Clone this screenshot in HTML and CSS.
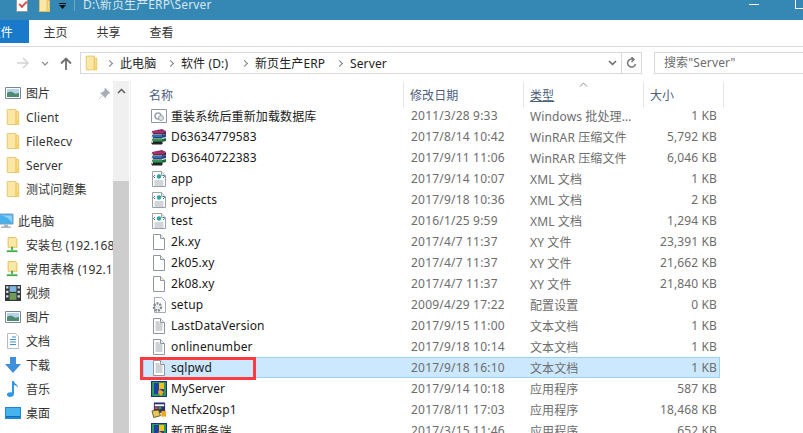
FILE: index.html
```html
<!DOCTYPE html>
<html lang="zh">
<head>
  <meta charset="UTF-8">
  <title>Server</title>
  <link rel="stylesheet" href="styles.css">
</head>
<body>
  <!-- Icones -->
  <svg class="defs" width="0" height="0">
    <symbol id="folder" viewBox="0 0 16 18">
      <path d="M1.500 .5h10v17h-10z" fill="#fde7a4" stroke="#e3c262"/>
      <path d="M11.500 3h3v14.500h-3z" fill="#fbe08c" stroke="#e3c262"/>
      <path d="M10.500 13h4v4h-4z" fill="#f6d168"/>
    </symbol>
    <symbol id="netfolder" viewBox="0 0 16 18">
      <path d="M2.500 .5h8l2 2v9h-10z" fill="#fde7a4" stroke="#e0b94e"/>
      <path d="M7 11v4" stroke="#3fae3f" stroke-width="2"/>
      <path d="M1 15h12v2H1z" fill="#3fae3f"/>
    </symbol>
    <symbol id="picture" viewBox="0 0 16 12">
      <path d="M.5 .5h15v11H.5z" fill="#fff" stroke="#7d8794"/>
      <path d="M2 2h12v4H2z" fill="#b5d3ec"/>
      <path d="M2 6c3-2 5-1 7 0s3 0 5 0v4H2z" fill="#4f8a72"/>
    </symbol>
    <symbol id="pc" viewBox="0 0 16 15">
      <path d="M1 .5h14v10H1z" fill="#49b0ee" stroke="#7e9db5"/>
      <path d="M2 2c5 0 9 3 12 7V2z" fill="#8ed2f7"/>
      <path d="M6 11h4v2H6zM3 13h10v1.500H3z" fill="#a9b6c2"/>
    </symbol>
    <symbol id="video" viewBox="0 0 14 14">
      <path d="M0 0h14v14H0z" fill="#33383f"/>
      <path d="M1 1h2v2H1zM1 5h2v2H1zM1 9h2v2H1zM11 1h2v2h-2zM11 5h2v2h-2zM11 9h2v2h-2z" fill="#d8dde2"/>
      <path d="M4 1h6v5H4z" fill="#7fb7df"/>
      <path d="M4 7h6v6H4z" fill="#6f9a58"/>
    </symbol>
    <symbol id="docs" viewBox="0 0 14 16">
      <path d="M1.500 .5h8l3 3v12h-11z" fill="#fff" stroke="#b5bcc4"/>
      <path d="M6 4h4M4 6.500h6M4 9h6M4 11.500h6" stroke="#3f8ed6"/>
    </symbol>
    <symbol id="download" viewBox="0 0 16 16">
      <path d="M5 0h6v7h5l-8 9-8-9h5z" fill="#3f8fdc"/>
    </symbol>
    <symbol id="music" viewBox="0 0 12 16">
      <path d="M5 0h2c0 3 4 3 4 7-1-2-2-2.500-4-3v9c0 2-2 3-4 3s-3-1-3-2.500S2 11 5 11.500z" fill="#2f95e6"/>
    </symbol>
    <symbol id="desktop" viewBox="0 0 16 12">
      <path d="M0 0h16v12H0z" fill="#1f87d8"/>
      <path d="M1 1h14v9H1z" fill="#46b2ee"/>
      <path d="M1 9h14v1H1z" fill="#0f6db8"/>
    </symbol>
    <symbol id="batch" viewBox="0 0 16 14">
      <path d="M.5 .5h15v13H.5z" fill="#fff" stroke="#8f969d"/>
      <circle cx="7" cy="7" r="3" fill="none" stroke="#9aa2aa" stroke-width="1.500"/>
      <circle cx="10" cy="9" r="2.500" fill="#dfe3e6" stroke="#9aa2aa"/>
    </symbol>
    <symbol id="rar" viewBox="0 0 16 16">
      <path d="M1 2l10-2 4 2-4 2H2z" fill="#8f2b6b"/>
      <path d="M1 2h10v3H1z" fill="#a8306f"/>
      <path d="M11 4l4-2v3l-4 1z" fill="#5f1d4a"/>
      <path d="M1 6h10v3H1z" fill="#2f6fc0"/>
      <path d="M11 6l4-1v3l-4 1z" fill="#1f4a88"/>
      <path d="M1 10h10v3H1z" fill="#2f9a58"/>
      <path d="M11 10l4-1v3l-4 1z" fill="#1f6a3c"/>
      <path d="M1 5h10M1 9h10M1 13h10v2H1z" stroke="#222" fill="#222"/>
      <path d="M0 3l2 1v2L0 5zM0 7l2 1v2L0 9zM0 11l2 1v2l-2-1z" fill="#e8e0c8"/>
    </symbol>
    <symbol id="xml" viewBox="0 0 14 16">
      <path d="M.5 .5h9l4 4v11H.5z" fill="#fff" stroke="#9aa1a8"/>
      <path d="M9.500 .5v4h4" fill="#e8ebee" stroke="#9aa1a8"/>
      <circle cx="7" cy="5.500" r="2.200" fill="#2aa6a0"/>
      <path d="M3 4l-1.500 1.500L3 7M11 4l1.500 1.500L11 7" fill="none" stroke="#5b6670"/>
      <path d="M2.500 10h9M2.500 12h9M2.500 14h9" stroke="#a5acb3"/>
    </symbol>
    <symbol id="blank" viewBox="0 0 12 16">
      <path d="M.5 .5h7l4 4v11H.5z" fill="#fff" stroke="#8f969d"/>
      <path d="M7.500 .5v4h4" fill="#eceef0" stroke="#8f969d"/>
    </symbol>
    <symbol id="text" viewBox="0 0 12 16">
      <path d="M.5 .5h7l4 4v11H.5z" fill="#fff" stroke="#8f969d"/>
      <path d="M7.500 .5v4h4" fill="#eceef0" stroke="#8f969d"/>
      <path d="M2.500 4h4M2.500 6h7M2.500 8h7M2.500 10h7M2.500 12h7" stroke="#a0a6ac"/>
    </symbol>
    <symbol id="config" viewBox="0 0 14 16">
      <path d="M2.500 .5h7l4 4v11h-11z" fill="#fff" stroke="#a5acb3"/>
      <circle cx="5.500" cy="10" r="3.500" fill="none" stroke="#7f868d" stroke-width="2.500" stroke-dasharray="2 1"/>
      <circle cx="5.500" cy="10" r="1.500" fill="#dfe3e6"/>
    </symbol>
    <symbol id="app" viewBox="0 0 16 16">
      <path d="M0 0h16v16H0z" fill="#1d2f88"/>
      <path d="M1 1h14v14H1z" fill="#2e9a5a"/>
      <path d="M3 2h10v11H3z" fill="#1b3fa8"/>
      <path d="M8 2h5v6H8z" fill="#f3c21f"/>
      <path d="M8 8l5 3-3 4-3-3z" fill="#f0a81c"/>
    </symbol>
    <symbol id="setup" viewBox="0 0 17 16">
      <path d="M3 0h12v11H3z" fill="#2b2f6f"/>
      <path d="M4 2h10v2H4z" fill="#fff"/>
      <path d="M4 5h3v2H4z" fill="#e64a3c"/>
      <path d="M8 5h3v2H8z" fill="#3fae3f"/>
      <path d="M1 9l7-1 2 6-7 2z" fill="#e6c65a" stroke="#6b5a1e"/>
      <path d="M11 9h5v6h-5z" fill="#f0a81c"/>
    </symbol>
  </svg>

  <div class="titlebar">
    <span class="qa-check"></span>
    <svg class="qa-folder"><use href="#folder"/></svg>
    <svg class="qa-down" width="7" height="6" viewBox="0 0 7 6"><path d="M0 .5h7" stroke="#111"/><path d="M0 2h7L3.500 6z" fill="#111"/></svg>
    <span class="qa-sep"></span>
    <span class="title">D:\新页生产ERP\Server</span>
    <span class="win-min"></span>
    <span class="win-max"></span>
  </div>

  <div class="ribbon">
    <div class="tab-file"><span>文件</span></div>
    <div class="tab">主页</div>
    <div class="tab">共享</div>
    <div class="tab">查看</div>
  </div>

  <div class="navbar">
    <div class="nav-btns">
      <svg class="nav-icon" width="14" height="12" viewBox="0 0 14 12"><path d="M1 6h11M7 1l5 5-5 5" fill="none" stroke="#d4d4d4" stroke-width="1.500"/></svg>
      <svg class="nav-drop" width="8" height="5" viewBox="0 0 8 5"><path d="M1 1l3 3 3-3" fill="none" stroke="#8a8a8a" stroke-width="1.200"/></svg>
      <svg class="nav-up" width="12" height="13" viewBox="0 0 12 13"><path d="M6 13V2M1 6.500L6 1.500l5 5" fill="none" stroke="#6f6f6f" stroke-width="1.800"/></svg>
    </div>
    <div class="address">
      <svg class="addr-folder"><use href="#folder"/></svg>
      <span class="crumb-sep"></span><span class="crumb crumb-pc">此电脑</span>
      <span class="crumb-sep"></span><span class="crumb crumb-d">软件 (D:)</span>
      <span class="crumb-sep"></span><span class="crumb crumb-erp">新页生产ERP</span>
      <span class="crumb-sep"></span><span class="crumb">Server</span>
      <svg class="addr-drop" width="9" height="6" viewBox="0 0 9 6"><path d="M1 1l3.500 3.500L8 1" fill="none" stroke="#666" stroke-width="1.500"/></svg>
      <div class="refresh">
        <svg width="11" height="12" viewBox="0 0 11 12"><path d="M9.500 7a4 4 0 1 1-2-4.500M5.500 0l2.500 2.500L5.500 5" fill="none" stroke="#777" stroke-width="1.500"/></svg>
      </div>
    </div>
    <div class="search">搜索"Server"</div>
  </div>

  <div class="main">
    <div class="sidebar">
      <div class="side-list">
        <div class="side-item"><svg class="ic-16"><use href="#picture"/></svg>图片<svg class="pin" width="11" height="11" viewBox="0 0 11 11"><path d="M6 0l5 5-1.500.5-2.500 2.500-.5 2-5-5 2-.5L6 2zM3 8l-3 3" fill="#a8aeb5" stroke="#a8aeb5" stroke-width=".6"/></svg></div>
        <div class="side-item"><svg class="ic-16"><use href="#folder"/></svg>Client</div>
        <div class="side-item"><svg class="ic-16"><use href="#folder"/></svg>FileRecv</div>
        <div class="side-item"><svg class="ic-16"><use href="#folder"/></svg>Server</div>
        <div class="side-item side-gap"><svg class="ic-16"><use href="#folder"/></svg>测试问题集</div>
        <div class="side-item side-root"><svg class="ic-16"><use href="#pc"/></svg>此电脑</div>
        <div class="side-item"><svg class="ic-16"><use href="#netfolder"/></svg>安装包 (192.168</div>
        <div class="side-item"><svg class="ic-16"><use href="#netfolder"/></svg>常用表格 (192.1</div>
        <div class="side-item"><svg class="ic-16"><use href="#video"/></svg>视频</div>
        <div class="side-item"><svg class="ic-16"><use href="#picture"/></svg>图片</div>
        <div class="side-item"><svg class="ic-16"><use href="#docs"/></svg>文档</div>
        <div class="side-item"><svg class="ic-16"><use href="#download"/></svg>下载</div>
        <div class="side-item"><svg class="ic-16"><use href="#music"/></svg>音乐</div>
        <div class="side-item"><svg class="ic-16"><use href="#desktop"/></svg>桌面</div>
      </div>
      <div class="scrollbar">
        <svg class="scroll-up" width="9" height="6" viewBox="0 0 9 6"><path d="M1 5l3.500-3.500L8 5" fill="none" stroke="#555" stroke-width="1.400"/></svg>
        <div class="scroll-thumb"></div>
      </div>
    </div>

    <div class="content">
      <div class="list-head">
        <div class="col-h h-name">名称</div>
        <div class="col-h h-date">修改日期</div>
        <div class="col-h h-type"><svg class="sort" width="9" height="5" viewBox="0 0 9 5"><path d="M1 4.500l3.500-3.500L8 4.500" fill="none" stroke="#8a8a8a"/></svg><u>类型</u></div>
        <div class="col-h h-size">大小</div>
      </div>

      <div class="rows">
        <div class="row"><div class="c-name"><svg class="ic-16"><use href="#batch"/></svg>重装系统后重新加载数据库</div><div class="c-date">2011/3/28 9:33</div><div>Windows 批处理...</div><div class="c-size">1 KB</div></div>
        <div class="row"><div class="c-name"><svg class="ic-16"><use href="#rar"/></svg>D63634779583</div><div class="c-date">2017/8/14 10:42</div><div>WinRAR 压缩文件</div><div class="c-size">5,792 KB</div></div>
        <div class="row"><div class="c-name"><svg class="ic-16"><use href="#rar"/></svg>D63640722383</div><div class="c-date">2017/9/11 11:06</div><div>WinRAR 压缩文件</div><div class="c-size">6,046 KB</div></div>
        <div class="row"><div class="c-name"><svg class="ic-16"><use href="#xml"/></svg>app</div><div class="c-date">2017/9/14 10:07</div><div>XML 文档</div><div class="c-size">1 KB</div></div>
        <div class="row"><div class="c-name"><svg class="ic-16"><use href="#xml"/></svg>projects</div><div class="c-date">2017/9/18 10:36</div><div>XML 文档</div><div class="c-size">2 KB</div></div>
        <div class="row"><div class="c-name"><svg class="ic-16"><use href="#xml"/></svg>test</div><div class="c-date">2016/1/25 9:59</div><div>XML 文档</div><div class="c-size">1,294 KB</div></div>
        <div class="row"><div class="c-name"><svg class="ic-16"><use href="#blank"/></svg>2k.xy</div><div class="c-date">2017/4/7 11:37</div><div>XY 文件</div><div class="c-size">23,391 KB</div></div>
        <div class="row"><div class="c-name"><svg class="ic-16"><use href="#blank"/></svg>2k05.xy</div><div class="c-date">2017/4/7 11:37</div><div>XY 文件</div><div class="c-size">21,662 KB</div></div>
        <div class="row"><div class="c-name"><svg class="ic-16"><use href="#blank"/></svg>2k08.xy</div><div class="c-date">2017/4/7 11:37</div><div>XY 文件</div><div class="c-size">21,840 KB</div></div>
        <div class="row"><div class="c-name"><svg class="ic-16"><use href="#config"/></svg>setup</div><div class="c-date">2009/4/29 17:22</div><div>配置设置</div><div class="c-size">0 KB</div></div>
        <div class="row"><div class="c-name"><svg class="ic-16"><use href="#text"/></svg>LastDataVersion</div><div class="c-date">2017/9/15 11:00</div><div>文本文档</div><div class="c-size">1 KB</div></div>
        <div class="row"><div class="c-name"><svg class="ic-16"><use href="#text"/></svg>onlinenumber</div><div class="c-date">2017/9/18 10:14</div><div>文本文档</div><div class="c-size">1 KB</div></div>
        <div class="row selected"><div class="c-name"><svg class="ic-16"><use href="#text"/></svg>sqlpwd</div><div class="c-date">2017/9/18 16:10</div><div>文本文档</div><div class="c-size">1 KB</div></div>
        <div class="row"><div class="c-name"><svg class="ic-16"><use href="#app"/></svg>MyServer</div><div class="c-date">2017/9/14 10:18</div><div>应用程序</div><div class="c-size">587 KB</div></div>
        <div class="row"><div class="c-name"><svg class="ic-16"><use href="#setup"/></svg>Netfx20sp1</div><div class="c-date">2017/8/11 17:03</div><div>应用程序</div><div class="c-size">18,468 KB</div></div>
        <div class="row"><div class="c-name"><svg class="ic-16"><use href="#app"/></svg>新页服务端</div><div class="c-date">2017/3/15 11:46</div><div>应用程序</div><div class="c-size">652 KB</div></div>
      </div>
    </div>
  </div>
</body>
</html>
```

FILE: styles.css
```css
* {
  margin: 0;
  padding: 0;
  box-sizing: border-box;
}

html, body {
  height: 433px;
  overflow: hidden;
}

body {
  font-family: "Noto Sans", "Noto Sans CJK SC", sans-serif;
  font-size: 12px;
  letter-spacing: .12px;
  color: #1a1a1a;
  background: #fff;
  display: flex;
  flex-direction: column;
}

.defs {
  position: absolute;
}

/* ===== Barra de titulo ===== */
.titlebar {
  height: 20px;
  flex: none;
  background: #3688b4;
  display: flex;
  align-items: flex-start;
  padding-left: 16px;
  overflow: hidden;
  position: relative;
}

.qa-check {
  width: 12px;
  height: 13px;
  margin-top: -1px;
  background: #fff;
  border: 1px solid #8d9aa3;
  border-top: none;
  position: relative;
}

.qa-check::after {
  content: "";
  position: absolute;
  left: 2px;
  top: 2px;
  width: 6px;
  height: 3px;
  border-left: 2px solid #d9534a;
  border-bottom: 2px solid #d9534a;
  transform: rotate(-45deg);
}

.qa-folder {
  width: 13px;
  height: 14px;
  margin: -2px 0 0 10px;
}

.qa-down {
  margin: 3px 0 0 8px;
  flex: none;
}

.qa-sep {
  width: 1px;
  height: 11px;
  margin-left: 8px;
  background: #6ea8c8;
}

.title {
  margin: -1px 0 0 8px;
  color: #d5e6f0;
  line-height: 12px;
}

.win-min {
  position: absolute;
  left: 749px;
  top: 4px;
  width: 10px;
  height: 1px;
  background: #fff;
}

.win-max {
  position: absolute;
  left: 795px;
  top: -2px;
  width: 12px;
  height: 11px;
  border: 1px solid #fff;
}

/* ===== Abas ===== */
.ribbon {
  height: 27px;
  flex: none;
  display: flex;
  border-bottom: 1px solid #dadbdc;
}

.tab-file {
  width: 29px;
  height: 23px;
  background: #1979ca;
  color: #fff;
  overflow: hidden;
  display: flex;
  justify-content: flex-end;
  align-items: center;
  padding: 1px 16px 0 0;
  white-space: nowrap;
}

.tab {
  width: 53px;
  height: 26px;
  line-height: 25px;
  text-align: center;
  color: #333;
}

/* ===== Barra de endereco ===== */
.navbar {
  height: 28px;
  flex: none;
  display: flex;
  align-items: flex-start;
  padding-top: 5px;
}

.nav-btns {
  width: 80px;
  flex: none;
  height: 22px;
  display: flex;
  align-items: center;
  padding-left: 16px;
}

.nav-drop {
  margin-left: 11px;
}

.nav-up {
  margin-left: 11px;
}

.address {
  width: 562px;
  height: 22px;
  flex: none;
  border: 1px solid #d9d9d9;
  display: flex;
  align-items: center;
  padding-left: 4px;
  white-space: nowrap;
  color: #222;
}

.addr-folder {
  width: 13px;
  height: 16px;
  margin-right: 9px;
}

.crumb-sep {
  width: 5px;
  height: 5px;
  border-top: 1.500px solid #808080;
  border-right: 1.500px solid #808080;
  transform: rotate(45deg);
  margin-right: 8px;
  flex: none;
}

.crumb {
  margin-right: 9px;
}

.crumb-pc {
  width: 39px;
}

.crumb-d {
  width: 52px;
}

.crumb-erp {
  width: 73px;
}

.addr-drop {
  margin-left: auto;
  margin-right: 4px;
}

.refresh {
  width: 20px;
  height: 100%;
  border-left: 1px solid #d9d9d9;
  display: flex;
  align-items: center;
  justify-content: center;
}

.search {
  width: 160px;
  height: 22px;
  flex: none;
  margin-left: 12px;
  border: 1px solid #d9d9d9;
  padding-left: 9px;
  line-height: 20px;
  color: #6d6d6d;
  white-space: nowrap;
}

/* ===== Painel principal ===== */
.main {
  flex: 1;
  display: flex;
  min-height: 0;
}

.sidebar {
  width: 131px;
  flex: none;
  display: flex;
  border-right: 1px solid #efefef;
  margin-top: 6px;
  height: 352px;
}

.side-list {
  width: 113px;
  flex: none;
  overflow: hidden;
}

.side-item {
  height: 24px;
  display: flex;
  align-items: center;
  padding-left: 5px;
  white-space: nowrap;
  color: #333;
  position: relative;
}

.side-item .ic-16 {
  margin-right: 5px;
}

.side-gap {
  margin-bottom: 8px;
}

.side-root {
  padding-left: 0;
  margin-left: -2px;
}

.side-root .ic-16 {
  margin-right: 4px;
}

.pin {
  position: absolute;
  left: 99px;
  top: 7px;
}

.scrollbar {
  width: 16px;
  flex: none;
  background: #f0f0f0;
  margin-right: 1px;
  padding-top: 7px;
  display: flex;
  flex-direction: column;
  align-items: center;
}

.scroll-thumb {
  width: 100%;
  margin-top: 87px;
  flex: 1;
  background: #cdcdcd;
}

/* ===== Lista de arquivos ===== */
.content {
  flex: 1;
  min-width: 0;
  overflow: hidden;
}

.list-head {
  height: 26px;
  margin-top: 7px;
  margin-bottom: -3px;
  display: flex;
  position: relative;
  color: #4c607a;
  line-height: 27px;
}

.col-h {
  border-right: 1px solid #e5e5e5;
  padding-left: 6px;
  position: relative;
}

.h-name {
  width: 273px;
  padding-left: 18px;
}

.h-date {
  width: 120px;
}

.h-type {
  width: 120px;
}

.h-size {
  width: 80px;
}

.sort {
  position: absolute;
  left: 55px;
  top: 0;
}

.rows {
  margin-left: 12px;
  width: 577px;
}

.row {
  height: 21px;
  display: grid;
  grid-template-columns: 267px 119px 110px 77px;
  align-items: center;
  border: 1px solid transparent;
  color: #6d6d6d;
  white-space: nowrap;
  position: relative;
}

.c-name {
  display: flex;
  align-items: center;
  padding-left: 7px;
  color: #1a1a1a;
}

.ic-16 {
  width: 16px;
  height: 16px;
  flex: none;
}

.c-name .ic-16 {
  margin-right: 4px;
}

.c-date {
  letter-spacing: .2px;
}

.c-size {
  text-align: right;
}

.selected {
  background: #cce8ff;
  border-color: #99d1ff;
}

/* marca vermelha do print */
.selected::after {
  content: "";
  position: absolute;
  left: -4px;
  top: -1px;
  width: 110px;
  height: 17px;
  border: 3px solid #fb3b3f;
}
```
